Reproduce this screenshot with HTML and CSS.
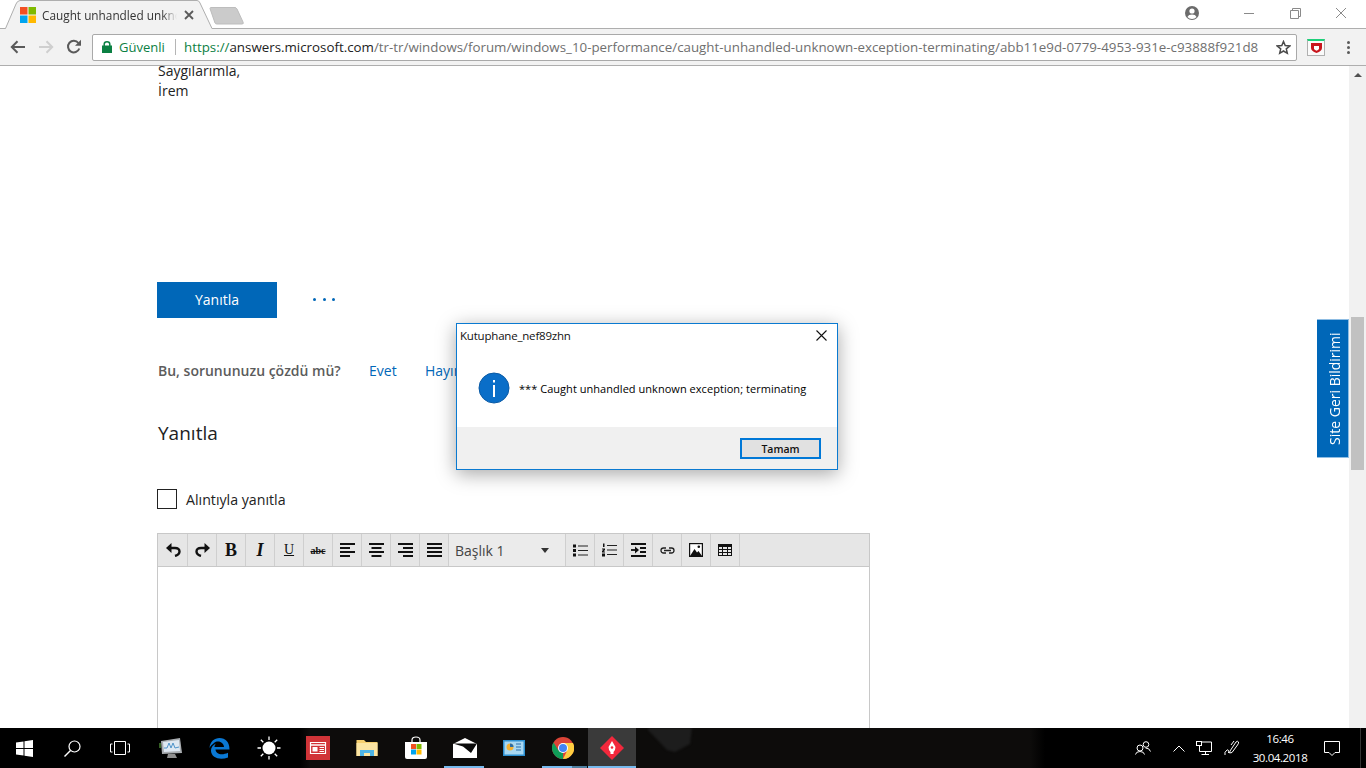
FILE: index.html
```html
<!DOCTYPE html>
<html lang="tr">
<head>
    <meta charset="UTF-8">
    <meta name="viewport" content="width=device-width, initial-scale=1.0">
    <link rel="stylesheet" href="styles.css">
    <title>Caught unhandled unknown exception; terminating</title>
</head>
<body>
    <div class="tab-strip">
        <div class="tab">
            <svg class="tab-shape" width="216" height="29" viewBox="0 0 216 29"><path d="M0 28.5H5.5L16 4Q17 1 20 .5H197Q199 .5 200 3L212 28.5H216V29H0Z" fill="#f2f2f2"/><path d="M0 28.5H5.5L16 4Q17 1 20 .5H197Q199 .5 200 3L212 28.5H216" fill="none" stroke="#aeaeae"/></svg>
            <svg class="tab-logo" width="16" height="16" viewBox="0 0 16 16"><rect width="7.5" height="7.5" fill="#f25022"/><rect x="8.5" width="7.5" height="7.5" fill="#7fba00"/><rect y="8.5" width="7.5" height="7.5" fill="#00a4ef"/><rect x="8.5" y="8.5" width="7.5" height="7.5" fill="#ffb900"/></svg>
            <span class="tab-title">Caught unhandled unknown exception; terminating</span>
            <svg class="tab-close" width="10" height="10" viewBox="0 0 10 10"><path d="M1 1L9 9M9 1L1 9" stroke="#5a5a5a" stroke-width="1.8"/></svg>
        </div>
        <svg class="new-tab" width="36" height="20" viewBox="0 0 36 20"><path d="M1 1.5Q1 .5 2 .5H26Q27 .5 28 2L34 15Q35 17 33 17H8Q6.5 17 6 16Z" fill="#cbcbcb" stroke="#bdbdbd"/></svg>
        <div class="window-controls">
            <svg class="profile" width="16" height="16" viewBox="0 0 16 16"><circle cx="8" cy="8" r="7" fill="#6b6b6b"/><circle cx="8" cy="6" r="2.6" fill="#fff"/><path d="M3.4 12Q4.5 9.6 8 9.6T12.6 12Q10.800 14 8 14T3.4 12Z" fill="#fff"/></svg>
            <svg class="win-btn" width="46" height="12" viewBox="0 0 46 12"><path d="M18 6.500H28" stroke="#8a8a8a"/></svg>
            <svg class="win-btn" width="46" height="12" viewBox="0 0 46 12"><path d="M18.500 3.500H26.500V11.500H18.500ZM20.500 3.500V1.500H28.500V9.500H26.500" fill="none" stroke="#8a8a8a"/></svg>
            <svg class="win-btn" width="46" height="12" viewBox="0 0 46 12"><path d="M18 1L28 11M28 1L18 11" stroke="#8a8a8a"/></svg>
        </div>
    </div>

    <div class="toolbar">
        <svg class="nav-icon" width="16" height="14" viewBox="0 0 16 14"><path d="M15 7H2M7.500 1.200L1.800 7L7.500 12.800" fill="none" stroke="#5a5a5a" stroke-width="2"/></svg>
        <svg class="nav-icon" width="16" height="14" viewBox="0 0 16 14"><path d="M1 7H14M8.500 1.200L14.200 7L8.500 12.800" fill="none" stroke="#cfcfcf" stroke-width="2"/></svg>
        <svg class="nav-icon" width="16" height="16" viewBox="0 0 16 16"><path d="M13.300 9.500A5.800 5.800 0 1 1 12.400 4" fill="none" stroke="#5a5a5a" stroke-width="2"/><path d="M15 .8V6.800H9Z" fill="#5a5a5a"/></svg>
        <div class="omnibox">
            <svg class="lock" width="10" height="12" viewBox="0 0 10 12"><rect y="4.500" width="10" height="7.500" fill="#0b8043"/><path d="M2.200 5V3.200A2.800 2.400 0 0 1 7.800 3.200V5" fill="none" stroke="#0b8043" stroke-width="1.500"/></svg>
            <span class="secure">Güvenli</span>
            <span class="url"><span class="url-scheme">https://</span><span class="url-host">answers.microsoft.com</span>/tr-tr/windows/forum/windows_10-performance/caught-unhandled-unknown-exception-terminating/abb11e9d-0779-4953-931e-c93888f921d8</span>
            <svg class="star" width="15" height="15" viewBox="0 0 15 15"><path d="M7.500 1.500L9.200 5.600L13.700 6L10.300 8.900L11.300 13.300L7.500 11L3.700 13.300L4.700 8.900L1.300 6L5.800 5.600Z" fill="none" stroke="#4a4a4a" stroke-width="1.500"/></svg>
        </div>
        <div class="ext">
            <svg width="11" height="10" viewBox="0 0 11 10"><path d="M0 0H11V5Q11 8 5.500 10Q0 8 0 5Z" fill="#c8161d"/><path d="M3 3H8V5.500Q8 6.800 5.500 7.800Q3 6.800 3 5.500Z" fill="#fff"/></svg>
        </div>
        <div class="menu-dots"><i></i><i></i><i></i></div>
    </div>

    <div class="viewport">
        <main class="page">
            <p class="sign">Saygılarımla,<br>İrem</p>
            <div class="reply-row">
                <button class="btn-reply">Yanıtla</button>
                <span class="more-dots"><i></i><i></i><i></i></span>
            </div>
            <div class="solved">
                <strong>Bu, sorununuzu çözdü mü?</strong>
                <a class="link-yes">Evet</a>
                <a>Hayır</a>
            </div>
            <h2>Yanıtla</h2>
            <label class="quote"><span class="check"></span>Alıntıyla yanıtla</label>
            <div class="editor">
                <div class="ed-bar">
                    <span class="ed-btn"><svg width="15" height="14" viewBox="0 0 15 14"><path d="M3.500 5H9Q13.500 5 13.500 8.500Q13.500 11.500 9 13" fill="none" stroke="#111" stroke-width="2.400"/><path d="M0 5L5.500 0V10Z" fill="#111"/></svg></span>
                    <span class="ed-btn"><svg width="15" height="14" viewBox="0 0 15 14"><path d="M11.500 5H6Q1.500 5 1.500 8.500Q1.500 11.500 6 13" fill="none" stroke="#111" stroke-width="2.400"/><path d="M15 5L9.500 0V10Z" fill="#111"/></svg></span>
                    <span class="ed-btn ed-b">B</span>
                    <span class="ed-btn ed-i">I</span>
                    <span class="ed-btn ed-u">U</span>
                    <span class="ed-btn ed-s">abc</span>
                    <span class="ed-btn"><svg width="15" height="14" viewBox="0 0 15 14"><path d="M0 1H15M0 5H10M0 9H15M0 13H10" stroke="#111" stroke-width="2"/></svg></span>
                    <span class="ed-btn"><svg width="15" height="14" viewBox="0 0 15 14"><path d="M0 1H15M2.500 5H12.500M0 9H15M2.500 13H12.500" stroke="#111" stroke-width="2"/></svg></span>
                    <span class="ed-btn"><svg width="15" height="14" viewBox="0 0 15 14"><path d="M0 1H15M5 5H15M0 9H15M5 13H15" stroke="#111" stroke-width="2"/></svg></span>
                    <span class="ed-btn"><svg width="15" height="14" viewBox="0 0 15 14"><path d="M0 1H15M0 5H15M0 9H15M0 13H15" stroke="#111" stroke-width="2"/></svg></span>
                    <span class="ed-select">Başlık 1<i class="caret"></i></span>
                    <span class="ed-btn"><svg width="15" height="13" viewBox="0 0 15 13"><path d="M0 .5H3V3.500H0ZM0 5H3V8H0ZM0 9.500H3V12.500H0Z" fill="#111"/><path d="M5 2H15M5 6.500H15M5 11H15" stroke="#222" stroke-width="1.200"/></svg></span>
                    <span class="ed-btn"><svg width="15" height="14" viewBox="0 0 15 14"><path d="M1 .5H2.500V4H1ZM0 5.500H3V7L1.500 8.500H3V9.500H0V8L1.500 6.500H0ZM0 10.500H3V13.500H0Z" fill="#111"/><path d="M5 2.500H15M5 7H15M5 11.500H15" stroke="#222" stroke-width="1.200"/></svg></span>
                    <span class="ed-btn"><svg width="15" height="14" viewBox="0 0 15 14"><path d="M0 1H15M9 5H15M9 9H15M0 13H15" stroke="#111" stroke-width="2"/><path d="M0 7H5" stroke="#111" stroke-width="1.800"/><path d="M4 3.500L8 7L4 10.500Z" fill="#111"/></svg></span>
                    <span class="ed-btn"><svg width="15" height="7" viewBox="0 0 15 7"><path d="M6 1H3.500A2.500 2.500 0 0 0 3.500 6H6M9 1H11.500A2.500 2.500 0 0 1 11.500 6H9M4 3.500H11" fill="none" stroke="#222" stroke-width="1.300"/></svg></span>
                    <span class="ed-btn"><svg width="14" height="14" viewBox="0 0 14 14"><rect x=".6" y=".6" width="12.800" height="12.800" fill="#fff" stroke="#111" stroke-width="1.200"/><path d="M1 13L5.500 6L8 9.500L9.500 8L13 13Z" fill="#111"/><circle cx="9.800" cy="3.800" r="1.300" fill="#111"/></svg></span>
                    <span class="ed-btn"><svg width="14" height="12" viewBox="0 0 14 12"><rect width="14" height="12" fill="#111"/><path d="M1 3H4V5H1ZM5 3H9V5H5ZM10 3H13V5H10ZM1 6H4V8H1ZM5 6H9V8H5ZM10 6H13V8H10ZM1 9H4V11H1ZM5 9H9V11H5ZM10 9H13V11H10Z" fill="#e6e6e6"/></svg></span>
                </div>
                <div class="ed-body"></div>
            </div>
        </main>
        <div class="scrollbar">
            <i class="scroll-up"></i>
            <div class="scroll-thumb"></div>
        </div>
        <a class="feedback">Site Geri Bildirimi</a>
    </div>

    <div class="dialog">
        <div class="dlg-title">
            <span>Kutuphane_nef89zhn</span>
            <svg width="11" height="11" viewBox="0 0 11 11"><path d="M.5 .5L10.500 10.500M10.500 .5L.5 10.500" stroke="#111" stroke-width="1.100"/></svg>
        </div>
        <div class="dlg-body">
            <svg width="32" height="32" viewBox="0 0 32 32"><circle cx="16" cy="16" r="15" fill="#0a6ec8" stroke="#0a5aa5"/><rect x="15" y="8" width="2" height="2.500" fill="#fff"/><rect x="15" y="13" width="2" height="12" fill="#fff"/></svg>
            <span>*** Caught unhandled unknown exception; terminating</span>
        </div>
        <div class="dlg-foot"><button class="dlg-ok">Tamam</button></div>
    </div>

    <footer class="taskbar">
        <span class="tb-item tb-narrow"><svg width="17" height="17" viewBox="0 0 17 17"><path d="M0 2.500L7.500 1.400V8H0ZM8.500 1.300L17 0V8H8.500ZM0 9H7.500V15.600L0 14.500ZM8.500 9H17V17L8.500 15.700Z" fill="#fff"/></svg></span>
        <span class="tb-item tb-narrow"><svg width="17" height="17" viewBox="0 0 17 17"><circle cx="10.500" cy="6.500" r="5.500" fill="none" stroke="#fff" stroke-width="1.200"/><path d="M6.500 10.500L.5 16.500" stroke="#fff" stroke-width="1.400"/></svg></span>
        <span class="tb-item tb-narrow"><svg width="20" height="14" viewBox="0 0 20 14"><path d="M4.500 .5H15.500V13.500H4.500ZM2.500 3H.5V11H2.500M17.500 3H19.500V11H17.500" fill="none" stroke="#fff"/></svg></span>
        <span class="tb-item tb-first"><svg width="24" height="24" viewBox="0 0 24 24"><path d="M2 5L21 2L23 17L3 18Z" fill="#a9adb1"/><path d="M4 6L20 4L21 15L5 16Z" fill="#dfe8f2"/><path d="M5 12L8 12L10 7L12 12L14 7L16 12L20 11" fill="none" stroke="#4f93c9"/><path d="M1 7V12" stroke="#6cc24a"/><path d="M9 18H16L18 22H8Z" fill="#8f8f8f"/></svg></span>
        <span class="tb-item"><svg width="21" height="21" viewBox="0 0 21 21"><path d="M.5 10C1 3.500 5.500 0 10.500 0C16.500 0 20.500 4 20.500 11.500H6.500C6.800 16 12.500 17.800 19 14.800V19.500C11 22.500 2.500 20 2 13C1.800 9.500 4 7 7 5.500C5.800 7 5.500 8 5.500 9H15C15 5 9.500 1.500 5 5C3 6.500 1.500 8 .5 10Z" fill="#0a78d4"/></svg></span>
        <span class="tb-item"><svg width="24" height="24" viewBox="0 0 24 24"><circle cx="12" cy="12" r="6.500" fill="#fff"/><path d="M12 .5V4M12 20V23.500M.5 12H4M20 12H23.500M3.800 3.800L6.300 6.300M17.700 17.700L20.200 20.200M20.200 3.800L17.700 6.300M6.300 17.700L3.800 20.200" stroke="#fff" stroke-width="1.300"/></svg></span>
        <span class="tb-item tb-news"><svg width="24" height="24" viewBox="0 0 24 24"><rect width="24" height="24" fill="#d13438"/><path d="M4.500 6.500H19.500V17.500H4.500Z" fill="none" stroke="#fff" stroke-width="1.200"/><path d="M5 9H19" stroke="#fff" stroke-width="1.500"/><path d="M6.500 11H11.500V15.500H6.500Z" fill="#fff"/><path d="M13.500 11.500H18M13.500 13.500H18M13.500 15.500H18" stroke="#fff"/></svg></span>
        <span class="tb-item"><svg width="22" height="18" viewBox="0 0 22 18"><path d="M.5 1H8L10 3H21.500V17H.5Z" fill="#f5cf6f"/><path d="M.5 4H21.500V17H.5Z" fill="#fbe5a3"/><path d="M4 17V11H18V17H14V14H8V17Z" fill="#4db4e6"/></svg></span>
        <span class="tb-item"><svg width="24" height="24" viewBox="0 0 24 24"><path d="M8 6.500V4Q8 1 12 1T16 4V6.500" fill="none" stroke="#fff" stroke-width="1.200"/><path d="M1 6H23V21Q23 23 21 23H3Q1 23 1 21Z" fill="#fff"/><rect x="7" y="8" width="5" height="5" fill="#f25022"/><rect x="12.500" y="8" width="5" height="5" fill="#7fba00"/><rect x="7" y="13.500" width="5" height="5" fill="#00a4ef"/><rect x="12.500" y="13.500" width="5" height="5" fill="#ffb900"/></svg></span>
        <span class="tb-item tb-mail"><svg width="24" height="20" viewBox="0 0 24 20"><path d="M0 6L12 0L24 6V20H0Z" fill="#fff"/><path d="M0 5.500H24L18 15L10 8.500Z" fill="#0a0a0a"/></svg></span>
        <span class="tb-item"><svg width="22" height="16" viewBox="0 0 22 16"><rect width="22" height="16" fill="#2b8fd0"/><rect x="1.500" y="1.500" width="19" height="13" fill="#a9d8f2"/><circle cx="7" cy="7" r="3.500" fill="#f2b134"/><path d="M7 7V3.500A3.500 3.500 0 0 1 10.500 7Z" fill="#2b6ea8"/><path d="M13 4H18M13 7H18M13 10H18" stroke="#2b6ea8"/></svg></span>
        <span class="tb-item tb-chrome"><svg width="22" height="22" viewBox="0 0 22 22"><circle cx="11" cy="11" r="11" fill="#db4437"/><path d="M11 11L1.500 16.500A11 11 0 0 0 11 22Z" fill="#0f9d58"/><path d="M1.500 16.500A11 11 0 0 1 1.500 5.500L6.500 13.500L11 22Z" fill="#0f9d58"/><path d="M11 6H21A11 11 0 0 1 11 22L15 14Z" fill="#ffcd40"/><circle cx="11" cy="11" r="5" fill="#fff"/><circle cx="11" cy="11" r="4" fill="#4285f4"/></svg></span>
        <span class="tb-item tb-active"><svg width="24" height="24" viewBox="0 0 24 24"><path d="M12 0L24 12L12 24L0 12Z" fill="#f2283c"/><path d="M12 5L15.500 11Q15.500 14 13.500 16V18H10.500V16Q8.500 14 8.500 11Z" fill="#fff"/><circle cx="12" cy="11.500" r="1.300" fill="#f2283c"/></svg></span>
        <svg class="bat" width="46" height="26" viewBox="0 0 46 26"><path d="M0 2V0H44L42 16L27 24L19 22Z" fill="#1d1d1d"/></svg>
        <div class="tray">
            <svg width="16" height="14" viewBox="0 0 16 14"><circle cx="5" cy="7" r="3" fill="none" stroke="#fff"/><path d="M.5 13.500Q1 10.500 5 10.500T9.500 13.500" fill="none" stroke="#fff"/><circle cx="11" cy="3.500" r="2.800" fill="none" stroke="#fff"/><path d="M10.500 7Q14.500 7 15.500 10.500" fill="none" stroke="#fff"/></svg>
            <svg class="tray-up" width="12" height="7" viewBox="0 0 12 7"><path d="M.5 6.500L6 1L11.500 6.500" fill="none" stroke="#fff"/></svg>
            <svg class="tray-net" width="16" height="15" viewBox="0 0 16 15"><path d="M3.500 1H15.500V10.500H3.500ZM9.500 10.500V13.500M5.500 13.500H13" fill="none" stroke="#fff"/><rect x=".5" y=".5" width="5" height="4" fill="#000" stroke="#fff"/></svg>
            <svg class="tray-pen" width="16" height="16" viewBox="0 0 16 16"><path d="M6 11L12 2Q13.500 .5 14.500 2Q15 3 13.500 5L8 12.500L5.500 13Z" fill="none" stroke="#fff"/><path d="M10 1L7 5M1 15Q0 12 3 10Q5 9 4.500 13" fill="none" stroke="#fff"/></svg>
            <div class="clock"><span>16:46</span><span>30.04.2018</span></div>
            <svg class="tray-note" width="16" height="15" viewBox="0 0 16 15"><path d="M.5 .5H15.500V11.500H11L8 14.500L5 11.500H.5Z" fill="none" stroke="#fff"/></svg>
            <i class="show-desktop"></i>
        </div>
    </footer>
</body>
</html>
```
FILE: styles.css
```css
html, body {
    margin: 0;
    padding: 0;
    width: 1366px;
    height: 768px;
    overflow: hidden;
}

body {
    display: flex;
    flex-direction: column;
    background: #fff;
    font-family: "Open Sans", "Noto Sans", sans-serif;
    color: #222;
}

/* browser chrome */
.tab-strip {
    display: flex;
    align-items: flex-start;
    height: 28px;
    border-bottom: 1px solid #aeaeae;
    background: #fff;
}

.tab {
    position: relative;
    display: flex;
    align-items: center;
    width: 216px;
    height: 29px;
    flex: none;
    padding-left: 20px;
    box-sizing: border-box;
}

.tab-shape {
    position: absolute;
    left: 0;
    top: 0;
}

.tab-logo {
    position: relative;
    flex: none;
}

.tab-title {
    position: relative;
    width: 135px;
    margin-left: 6px;
    overflow: hidden;
    white-space: nowrap;
    font-size: 11.8px;
    color: #333;
    -webkit-mask-image: linear-gradient(to right, #000 120px, transparent 135px);
    mask-image: linear-gradient(to right, #000 120px, transparent 135px);
}

.tab-close {
    position: relative;
    margin-left: 7px;
    flex: none;
}

.new-tab {
    margin: 7px 0 0 -7px;
    flex: none;
}

.window-controls {
    display: flex;
    align-items: center;
    margin-left: auto;
    height: 26px;
    padding-right: 2px;
}

.profile {
    margin-right: 26px;
}

.win-btn {
    flex: none;
}

.toolbar {
    display: flex;
    align-items: center;
    height: 36px;
    flex: none;
    background: #f2f2f2;
    border-bottom: 1px solid #aeaeae;
    padding-left: 10px;
}

.nav-icon {
    flex: none;
    margin-right: 12px;
}

.nav-icon:nth-child(3) {
    margin-right: 10px;
}

.omnibox {
    display: flex;
    align-items: center;
    width: 1205px;
    height: 27px;
    flex: none;
    box-sizing: border-box;
    background: #fff;
    border: 1px solid #a9a9a9;
    border-radius: 2px;
    padding-left: 9px;
    white-space: nowrap;
}

.lock {
    flex: none;
}

.secure {
    width: 56px;
    margin-left: 7px;
    border-right: 1px solid #b5b5b5;
    font-size: 13px;
    line-height: 16px;
    color: #0b8043;
    flex: none;
}

.url {
    margin-left: 8px;
    font-size: 13.33px;
    color: #6f6f6f;
    flex: none;
}

.url-scheme {
    color: #0b8043;
}

.url-host {
    color: #222;
}

.star {
    margin-left: auto;
    margin-right: 5px;
    flex: none;
}

.ext {
    display: flex;
    align-items: center;
    justify-content: center;
    width: 16px;
    height: 14px;
    margin-left: 10px;
    background: #fafafa;
    border: 1px solid #b0b0b0;
    border-top: 2px solid #1ed07a;
    flex: none;
}

.menu-dots {
    display: flex;
    flex-direction: column;
    gap: 2px;
    margin-left: 22px;
}

.menu-dots i {
    display: block;
    width: 3px;
    height: 3px;
    border-radius: 50%;
    background: #5a5a5a;
}

/* page */
.viewport {
    position: relative;
    display: flex;
    flex: 1;
    min-height: 0;
    overflow: hidden;
}

.page {
    flex: 1;
    padding-left: 157px;
    font-size: 14px;
}

.sign {
    margin: -5px 0 0;
    padding-left: 1px;
    line-height: 20px;
    color: #222;
}

.reply-row {
    display: flex;
    align-items: center;
    margin-top: 181px;
}

.btn-reply {
    width: 120px;
    height: 36px;
    padding: 0 0 2px;
    border: 0;
    background: #0067b8;
    color: #fff;
    font-family: inherit;
    font-size: 14px;
    font-weight: 400;
}

.more-dots {
    display: flex;
    gap: 6.5px;
    margin: -1px 0 0 36px;
}

.more-dots i {
    display: block;
    width: 3px;
    height: 3px;
    border-radius: 50%;
    background: #0067b8;
}

.solved {
    display: flex;
    align-items: center;
    margin-top: 43px;
    padding-left: 1px;
    line-height: 20px;
    white-space: nowrap;
}

.solved strong {
    width: 211px;
    font-size: 14px;
    font-weight: 600;
    color: #5c5c5c;
}

.solved a {
    width: 56px;
    color: #0067b8;
}

h2 {
    margin: 39px 0 0;
    padding-left: 1px;
    font-size: 19px;
    font-weight: 400;
    line-height: 26px;
    color: #222;
}

.quote {
    display: flex;
    align-items: center;
    margin-top: 43px;
    font-size: 14.2px;
}

.check {
    width: 18px;
    height: 18px;
    margin-right: 9px;
    border: 1px solid #222;
}

.editor {
    width: 713px;
    height: 300px;
    margin-top: 24px;
    box-sizing: border-box;
    border: 1px solid #c8c8c8;
}

.ed-bar {
    display: flex;
    height: 32px;
    padding-left: 1px;
    background: #e6e6e6;
    border-bottom: 1px solid #c8c8c8;
}

.ed-btn {
    display: flex;
    align-items: center;
    justify-content: center;
    width: 28px;
    flex: none;
    border-right: 1px solid #cfcfcf;
    font-family: "Liberation Serif", serif;
    color: #111;
}

.ed-b {
    font-size: 18px;
    font-weight: 700;
}

.ed-i {
    font-size: 18px;
    font-weight: 700;
    font-style: italic;
}

.ed-u {
    font-size: 14px;
    text-decoration: underline;
}

.ed-s {
    font-size: 10px;
    font-weight: 700;
    text-decoration: line-through;
}

.ed-select {
    display: flex;
    align-items: center;
    justify-content: space-between;
    width: 94px;
    padding: 0 16px 0 6px;
    flex: none;
    background: #ebebeb;
    border-right: 1px solid #cfcfcf;
    font-size: 14px;
    color: #444;
}

.caret {
    width: 0;
    height: 0;
    border-left: 4.500px solid transparent;
    border-right: 4.500px solid transparent;
    border-top: 5px solid #333;
}

.scrollbar {
    display: flex;
    flex-direction: column;
    align-items: center;
    width: 17px;
    flex: none;
    background: #f1f1f1;
}

.scroll-up {
    width: 0;
    height: 0;
    margin-top: 7px;
    border-left: 4px solid transparent;
    border-right: 4px solid transparent;
    border-bottom: 4px solid #505050;
}

.scroll-thumb {
    width: 13px;
    height: 153px;
    margin-top: 240px;
    background: #c1c1c1;
}

.feedback {
    position: absolute;
    right: 17px;
    top: 253px;
    width: 32px;
    height: 139px;
    display: flex;
    align-items: center;
    justify-content: center;
    box-sizing: border-box;
    padding-right: 3px;
    background: #0067b8;
    border: 1px solid #8fbde3;
    border-right: 0;
    color: #fff;
    font-size: 14px;
    writing-mode: vertical-rl;
    transform: rotate(180deg);
    white-space: nowrap;
}

/* message box */
.dialog {
    position: absolute;
    left: 456px;
    top: 323px;
    width: 382px;
    height: 147px;
    box-sizing: border-box;
    display: flex;
    flex-direction: column;
    background: #fff;
    border: 1px solid #0a7ad1;
    box-shadow: 0 4px 18px rgba(0, 0, 0, 0.35);
    font-size: 11.5px;
    color: #111;
}

.dlg-title {
    display: flex;
    align-items: center;
    justify-content: space-between;
    height: 23px;
    padding: 0 10px 0 3px;
    letter-spacing: -0.2px;
}

.dlg-body {
    display: flex;
    align-items: center;
    gap: 9px;
    height: 80px;
    padding: 2px 0 0 21px;
    box-sizing: border-box;
    font-size: 11px;
    letter-spacing: 0.04px;
    color: #000;
}

.dlg-foot {
    flex: 1;
    display: flex;
    align-items: flex-start;
    justify-content: flex-end;
    padding: 11px 16px 0 0;
    background: #f0f0f0;
}

.dlg-ok {
    width: 81px;
    height: 21px;
    box-sizing: border-box;
    padding: 0;
    background: #e1e1e1;
    border: 2px solid #0078d7;
    font-family: inherit;
    font-size: 10.5px;
    font-weight: 600;
    color: #111;
}

/* taskbar */
.taskbar {
    position: relative;
    display: flex;
    align-items: center;
    height: 40px;
    flex: none;
    overflow: hidden;
    background: linear-gradient(to right, #000 300px, #0d0c0b 310px, #0d0c0b 1030px, #000 1045px);
}

.tb-item {
    position: relative;
    display: flex;
    align-items: center;
    justify-content: center;
    width: 49px;
    height: 40px;
    flex: none;
    box-sizing: border-box;
}

.tb-narrow {
    width: 48px;
}

.tb-first {
    margin-left: 2px;
}

/* running app underline */
.tb-mail::after,
.tb-chrome::after,
.tb-active::after {
    content: "";
    position: absolute;
    bottom: 0;
    height: 2px;
    background: #76b9ed;
}

.tb-mail::after {
    left: 4px;
    right: 5px;
}

.tb-chrome::after {
    left: 4px;
    right: 0;
    background: linear-gradient(to right, #76b9ed 30px, #4f7f9f 30px);
}

.tb-active {
    width: 48px;
    margin-left: 1px;
    background: #3a3a3a;
}

.tb-active::after {
    left: 0;
    right: 0;
}

.bat {
    align-self: flex-start;
    margin-left: 12px;
    flex: none;
    filter: blur(1px);
}

.tray {
    display: flex;
    align-items: center;
    margin-left: auto;
    height: 40px;
    color: #fff;
}

.tray-up {
    margin-left: 22px;
}

.tray-net {
    margin-left: 11px;
}

.tray-pen {
    margin-left: 12px;
}

.clock {
    display: flex;
    flex-direction: column;
    align-items: center;
    width: 62px;
    margin-left: 9px;
    font-size: 11.5px;
    line-height: 19px;
    letter-spacing: -0.4px;
}

.tray-note {
    margin-left: 13px;
}

.show-desktop {
    width: 1px;
    height: 40px;
    margin-left: 20px;
    margin-right: 5px;
    background: #333;
}
```
